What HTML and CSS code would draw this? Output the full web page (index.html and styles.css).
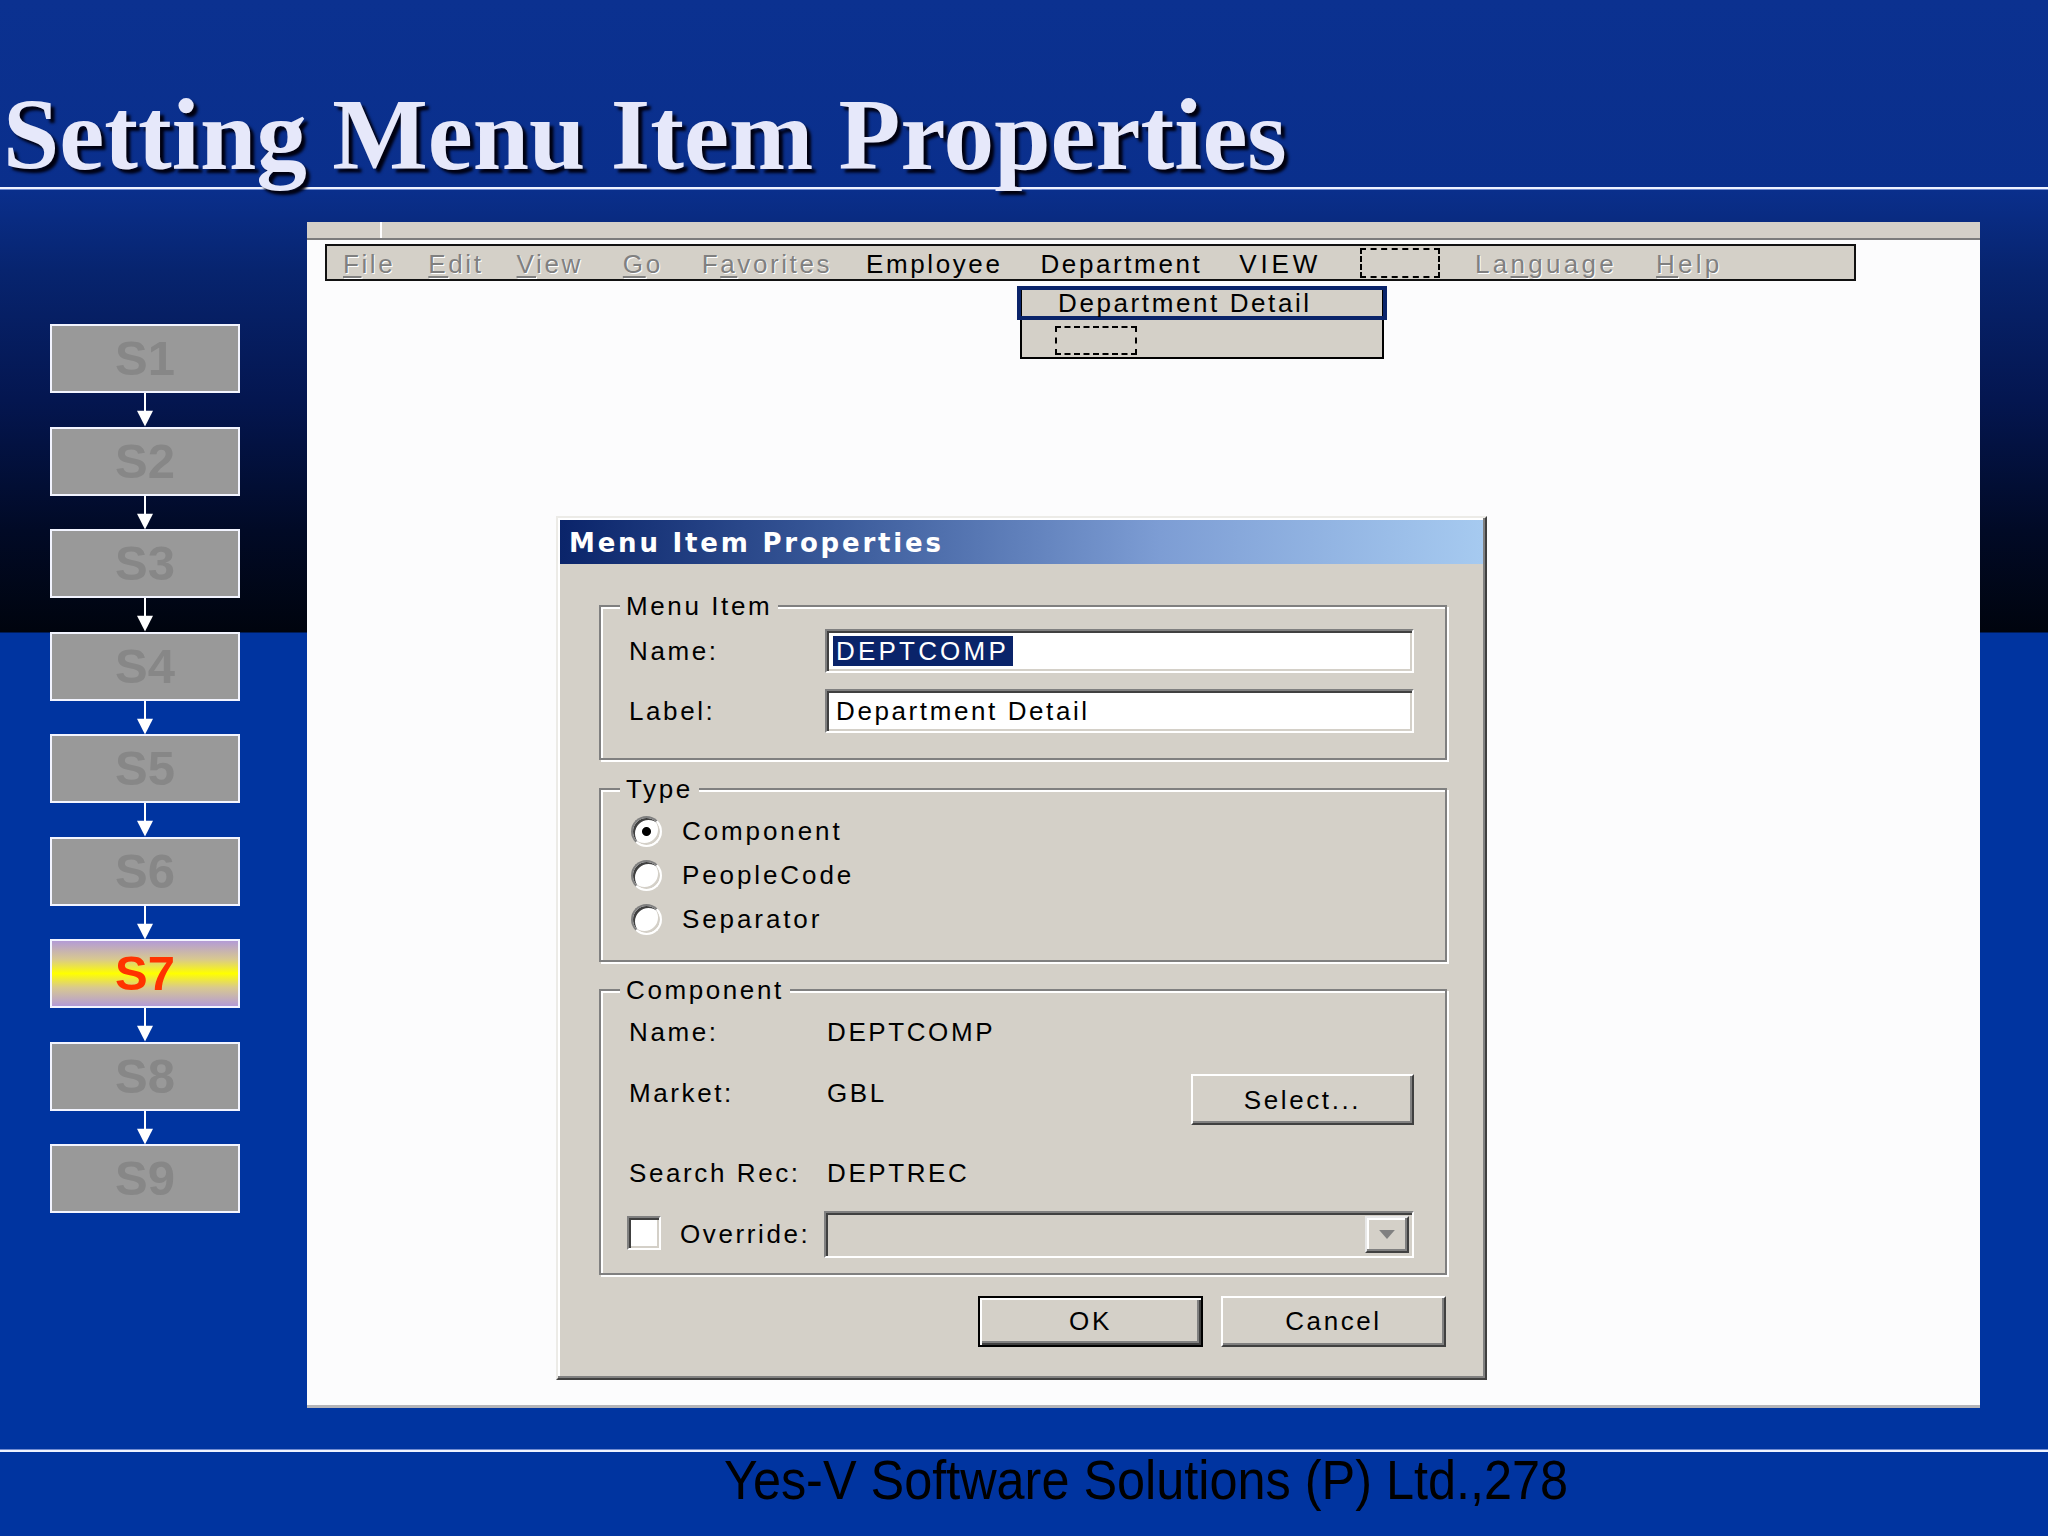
FILE: index.html
```html
<!DOCTYPE html>
<html lang="en">
<head>
<meta charset="utf-8">
<title>Setting Menu Item Properties</title>
<link rel="stylesheet" href="styles.css">
</head>
<body>
<div class="slide">
  <h1 class="title">Setting Menu Item Properties</h1>
  <div class="content">
    <ol class="steps">
      <li class="step">S1</li>
      <li class="arrow"><svg viewBox="0 0 20 34" preserveAspectRatio="none"><rect x="9" y="0" width="2" height="20" fill="#fff"/><polygon points="2,18 18,18 10,34" fill="#fff"/></svg></li>
      <li class="step">S2</li>
      <li class="arrow"><svg viewBox="0 0 20 34" preserveAspectRatio="none"><rect x="9" y="0" width="2" height="20" fill="#fff"/><polygon points="2,18 18,18 10,34" fill="#fff"/></svg></li>
      <li class="step">S3</li>
      <li class="arrow"><svg viewBox="0 0 20 34" preserveAspectRatio="none"><rect x="9" y="0" width="2" height="20" fill="#fff"/><polygon points="2,18 18,18 10,34" fill="#fff"/></svg></li>
      <li class="step">S4</li>
      <li class="arrow"><svg viewBox="0 0 20 34" preserveAspectRatio="none"><rect x="9" y="0" width="2" height="20" fill="#fff"/><polygon points="2,18 18,18 10,34" fill="#fff"/></svg></li>
      <li class="step">S5</li>
      <li class="arrow"><svg viewBox="0 0 20 34" preserveAspectRatio="none"><rect x="9" y="0" width="2" height="20" fill="#fff"/><polygon points="2,18 18,18 10,34" fill="#fff"/></svg></li>
      <li class="step">S6</li>
      <li class="arrow"><svg viewBox="0 0 20 34" preserveAspectRatio="none"><rect x="9" y="0" width="2" height="20" fill="#fff"/><polygon points="2,18 18,18 10,34" fill="#fff"/></svg></li>
      <li class="step current">S7</li>
      <li class="arrow"><svg viewBox="0 0 20 34" preserveAspectRatio="none"><rect x="9" y="0" width="2" height="20" fill="#fff"/><polygon points="2,18 18,18 10,34" fill="#fff"/></svg></li>
      <li class="step">S8</li>
      <li class="arrow"><svg viewBox="0 0 20 34" preserveAspectRatio="none"><rect x="9" y="0" width="2" height="20" fill="#fff"/><polygon points="2,18 18,18 10,34" fill="#fff"/></svg></li>
      <li class="step">S9</li>
    </ol>

    <div class="shot ui">
      <div class="shot-strip"><span class="strip-left"></span></div>
      <div class="menubar">
        <span class="mi dis"><u>F</u>ile</span>
        <span class="mi dis"><u>E</u>dit</span>
        <span class="mi dis"><u>V</u>iew</span>
        <span class="mi dis"><u>G</u>o</span>
        <span class="mi dis">F<u>a</u>vorites</span>
        <span class="mi">Employee</span>
        <span class="mi">Department</span>
        <span class="mi wide">VIEW</span>
        <span class="mi dashed"></span>
        <span class="mi dis">La<u>n</u>guage</span>
        <span class="mi dis"><u>H</u>elp</span>
      </div>

      <div class="dropdown">
        <div class="dd-hi">Department Detail</div>
        <div class="dd-dashed"></div>
      </div>

      <div class="dialog">
        <div class="dlg-title">Menu Item Properties</div>
        <div class="dlg-body">
          <fieldset class="group g-item">
            <legend>Menu Item</legend>
            <div class="frow"><span class="flabel">Name:</span><div class="input"><span class="sel">DEPTCOMP</span></div></div>
            <div class="frow"><span class="flabel">Label:</span><div class="input">Department Detail</div></div>
          </fieldset>

          <fieldset class="group g-type">
            <legend>Type</legend>
            <div class="rrow"><span class="radio on"></span><span class="rlabel">Component</span></div>
            <div class="rrow"><span class="radio"></span><span class="rlabel">PeopleCode</span></div>
            <div class="rrow"><span class="radio"></span><span class="rlabel">Separator</span></div>
          </fieldset>

          <fieldset class="group g-comp">
            <legend>Component</legend>
            <div class="crow r-name"><span class="flabel">Name:</span><span>DEPTCOMP</span></div>
            <div class="crow r-market"><span class="flabel">Market:</span><span>GBL</span><span class="btn select">Select...</span></div>
            <div class="crow r-search"><span class="flabel">Search Rec:</span><span>DEPTREC</span></div>
            <div class="crow r-over">
              <span class="check"></span><span class="olabel">Override:</span>
              <div class="combo"><span class="combo-btn"><svg viewBox="0 0 14 8"><polygon points="0,0 14,0 7,8" fill="#808080"/></svg></span></div>
            </div>
          </fieldset>

          <div class="dlg-buttons">
            <span class="btn default">OK</span>
            <span class="btn">Cancel</span>
          </div>
        </div>
      </div>
    </div>
  </div>
  <footer class="footer"><span>Yes-V Software Solutions (P) Ltd.,278</span></footer>
</div>
</body>
</html>
```

FILE: styles.css
```css
* { box-sizing: border-box; }

html, body {
  margin: 0;
  padding: 0;
}

body {
  width: 2048px;
  height: 1536px;
  overflow: hidden;
  background: #0034a0;
}

.slide {
  width: 2048px;
  height: 1536px;
  overflow: hidden;
  display: flex;
  flex-direction: column;
  background: linear-gradient(to bottom,
    #0b3190 0px, #0a2f8c 190px, #07246f 270px, #041650 400px,
    #010a26 530px, #00040e 632px, #0034a0 633px, #0034a0 100%);
}

/* ---------- title ---------- */
.title {
  margin: 0;
  height: 189px;
  flex: none;
  padding: 85px 0 0 3px;
  font-family: "Liberation Serif", "Times New Roman", serif;
  font-weight: bold;
  font-size: 101.3px;
  line-height: 101px;
  color: #e6e8fa;
  text-shadow: 4px 4px 3px #000010;
  white-space: nowrap;
  border-bottom: 2px solid #eef2ff;
  box-shadow: 0 1px 0 #6f8ad0;
}

/* ---------- content ---------- */
.content {
  display: flex;
  height: 1261px;
  flex: none;
}

.steps {
  list-style: none;
  margin: 0 0 0 50px;
  padding: 135px 0 0;
  width: 190px;
  display: flex;
  flex-direction: column;
  align-items: center;
}

.step {
  width: 190px;
  height: 69px;
  border: 2px solid #f2f4ff;
  background: #999999;
  color: #878787;
  font-family: "Liberation Sans", Arial, sans-serif;
  font-weight: bold;
  font-size: 49px;
  line-height: 1;
  display: flex;
  align-items: center;
  justify-content: center;
}

.step.current {
  background: linear-gradient(to bottom, #b39bd6 0%, #d8c890 28%, #ffff00 50%, #d8c890 72%, #b39bd6 100%);
  color: #ff3300;
}

.arrow {
  height: 33.5px;
  width: 20px;
}

.arrow svg {
  display: block;
  width: 20px;
  height: 100%;
}

/* ---------- screenshot window ---------- */
.ui {
  font-family: "Liberation Sans", Arial, sans-serif;
  font-size: 26px;
  letter-spacing: 2.6px;
  color: #000;
}

.shot {
  margin: 33px 0 0 67px;
  width: 1673px;
  height: 1186px;
  background: #fcfcfd;
  border-bottom: 3px solid #b4b4b8;
  position: relative;
}

.shot-strip {
  height: 18px;
  background: #d4d0c8;
  border-bottom: 2px solid #7c7c7c;
  display: flex;
}

.strip-left {
  width: 75px;
  border-right: 2px solid #ffffff;
}

.menubar {
  margin: 4px 0 0 18px;
  width: 1531px;
  height: 37px;
  border: 2px solid #111;
  background: #d4d0c8;
  display: flex;
  align-items: center;
  padding: 3px 0 0 16px;
  gap: 35px;
  white-space: nowrap;
}

.mi:nth-child(2) { margin-left: -2px; }
.mi:nth-child(3) { margin-left: -2px; }
.mi:nth-child(4) { margin-left: 5px; }
.mi:nth-child(5) { margin-left: 4px; }
.mi:nth-child(6) { margin-left: -1px; }
.mi:nth-child(7) { margin-left: 3px; }
.mi:nth-child(8) { margin-left: 2px; letter-spacing: 3.8px; }
.mi:nth-child(10) { margin-left: -3px; letter-spacing: 3.3px; }
.mi:nth-child(11) { margin-left: 4px; letter-spacing: 3.2px; }

.mi u { text-decoration-thickness: 2px; text-underline-offset: 3px; }

.mi.dis {
  color: #808080;
  text-shadow: 1px 1px 0 #ffffff;
}

.mi.dashed {
  width: 80px;
  height: 30px;
  margin-top: -3px;
  border: 2px dashed #000;
  margin-left: 4px;
  margin-right: 3px;
}

.dropdown {
  position: absolute;
  left: 713px;
  top: 64px;
  width: 364px;
  height: 73px;
  background: #d4d0c8;
  border: 2px solid #000;
}

.dd-hi {
  margin: -2px -5px 0 -5px;
  height: 34px;
  border: 4px solid #0a246a;
  padding-left: 37px;
  line-height: 26px;
  white-space: nowrap;
}

.dd-dashed {
  margin: 6px 0 0 33px;
  width: 82px;
  height: 29px;
  border: 2px dashed #000;
}

/* ---------- dialog ---------- */
.dialog {
  position: absolute;
  left: 249px;
  top: 294px;
  width: 931px;
  height: 864px;
  background: #d4d0c8;
  border: 2px solid;
  border-color: #ecebe7 #404040 #404040 #ecebe7;
  box-shadow: inset -2px -2px 0 #808080, inset 2px 2px 0 #ffffff;
  padding: 2px;
}

.dlg-title {
  height: 44px;
  background: linear-gradient(to right, #0a246a 0%, #3a5a9a 30%, #7d9dd4 65%, #a6caf0 100%);
  color: #fff;
  font-family: "DejaVu Sans", Verdana, sans-serif;
  font-weight: bold;
  font-size: 26px;
  letter-spacing: 2.8px;
  line-height: 46px;
  padding-left: 9px;
  white-space: nowrap;
}

.dlg-body {
  padding: 27px 36px 0 39px;
}

.group {
  margin: 0;
  min-width: 0;
  border: 2px solid #808080;
  box-shadow: inset 2px 2px 0 #ffffff, 2px 2px 0 #ffffff;
  padding: 8px 31px 25px 28px;
}

.group legend {
  margin-left: -9px;
  padding: 0 6px;
  line-height: 30px;
  background: #d4d0c8;
}

.g-item {
  display: flex;
  flex-direction: column;
  gap: 16px;
}

.frow {
  display: flex;
  align-items: center;
  height: 44px;
}

.flabel {
  width: 196px;
  flex: none;
  white-space: nowrap;
}

.crow .flabel { width: 198px; }

.input {
  flex: 1;
  height: 44px;
  background: #fff;
  border: 2px solid;
  border-color: #808080 #ffffff #ffffff #808080;
  box-shadow: inset 2px 2px 0 #404040, inset -2px -2px 0 #d4d0c8;
  padding-left: 9px;
  display: flex;
  align-items: center;
  white-space: nowrap;
}

.sel {
  background: #0a246a;
  color: #fff;
  margin-left: -3px;
  padding: 2px 4px 2px 3px;
  letter-spacing: 3.2px;
  line-height: 26px;
}

.g-type {
  margin-top: 14px;
  padding-top: 5px;
  padding-bottom: 19px;
}

.rrow {
  height: 44px;
  display: flex;
  align-items: center;
}

.radio {
  width: 31px;
  height: 31px;
  margin-left: 2px;
  border-radius: 50%;
  background: #fff;
  border: 2px solid;
  border-color: #808080 #ffffff #ffffff #808080;
  box-shadow: inset 2px 2px 0 #404040, inset -2px -2px 0 #d4d0c8;
  flex: none;
}

.radio.on {
  background: radial-gradient(circle, #000 0 4px, #fff 5px);
}

.rlabel { margin-left: 20px; letter-spacing: 2.9px; }

.g-comp {
  margin-top: 13px;
  padding-top: 5px;
  padding-bottom: 15px;
}

.crow {
  display: flex;
  align-items: center;
  white-space: nowrap;
}

.r-name { height: 44px; }

.r-market {
  margin-top: 20px;
  height: 51px;
  align-items: flex-start;
  padding-top: 4px;
}

.r-market .select { margin-top: -4px; }

.r-search { margin-top: 26px; height: 44px; }

.r-over { margin-top: 16px; height: 47px; }

.check {
  width: 34px;
  height: 34px;
  margin-left: -2px;
  margin-top: -4px;
  background: #fff;
  border: 2px solid;
  border-color: #808080 #ffffff #ffffff #808080;
  box-shadow: inset 2px 2px 0 #404040, inset -2px -2px 0 #d4d0c8;
  flex: none;
}

.olabel { margin-left: 19px; }

.combo {
  margin-left: auto;
  width: 590px;
  height: 47px;
  background: #d4d0c8;
  border: 2px solid;
  border-color: #808080 #ffffff #ffffff #808080;
  box-shadow: inset 2px 2px 0 #404040, inset -2px -2px 0 #d4d0c8;
  display: flex;
  align-items: center;
  justify-content: flex-end;
  padding-right: 3px;
}

.combo-btn {
  width: 44px;
  height: 37px;
  background: #d4d0c8;
  border: 2px solid;
  border-color: #e8e8e8 #404040 #404040 #e8e8e8;
  box-shadow: inset -2px -2px 0 #808080, inset 2px 2px 0 #ffffff;
  display: flex;
  align-items: center;
  justify-content: center;
}

.combo-btn svg { width: 16px; height: 9px; display: block; }

.btn {
  display: flex;
  align-items: center;
  justify-content: center;
  background: #d4d0c8;
  border: 2px solid;
  border-color: #ffffff #404040 #404040 #ffffff;
  box-shadow: inset -2px -2px 0 #808080;
  white-space: nowrap;
}

.select {
  margin-left: auto;
  width: 223px;
  height: 51px;
  padding-top: 2px;
}

.dlg-buttons {
  margin-top: 21px;
  display: flex;
  justify-content: flex-end;
  gap: 18px;
  padding-right: 1px;
}

.dlg-buttons .btn {
  width: 225px;
  height: 51px;
}

.btn.default {
  border: 2px solid #000;
  box-shadow: inset 2px 2px 0 #ffffff, inset -2px -2px 0 #404040, inset -4px -4px 0 #808080;
}

/* ---------- footer ---------- */
.footer {
  flex: none;
  height: 86px;
  border-top: 2px solid #eef2ff;
  box-shadow: 0 -1px 0 #6f8ad0;
  display: flex;
  justify-content: center;
  padding-left: 244px;
  font-family: "Liberation Sans", Arial, sans-serif;
  font-size: 56px;
  line-height: 56px;
  color: #000;
}

.footer span {
  display: inline-block;
  transform: scaleX(0.9);
  white-space: nowrap;
}
```
